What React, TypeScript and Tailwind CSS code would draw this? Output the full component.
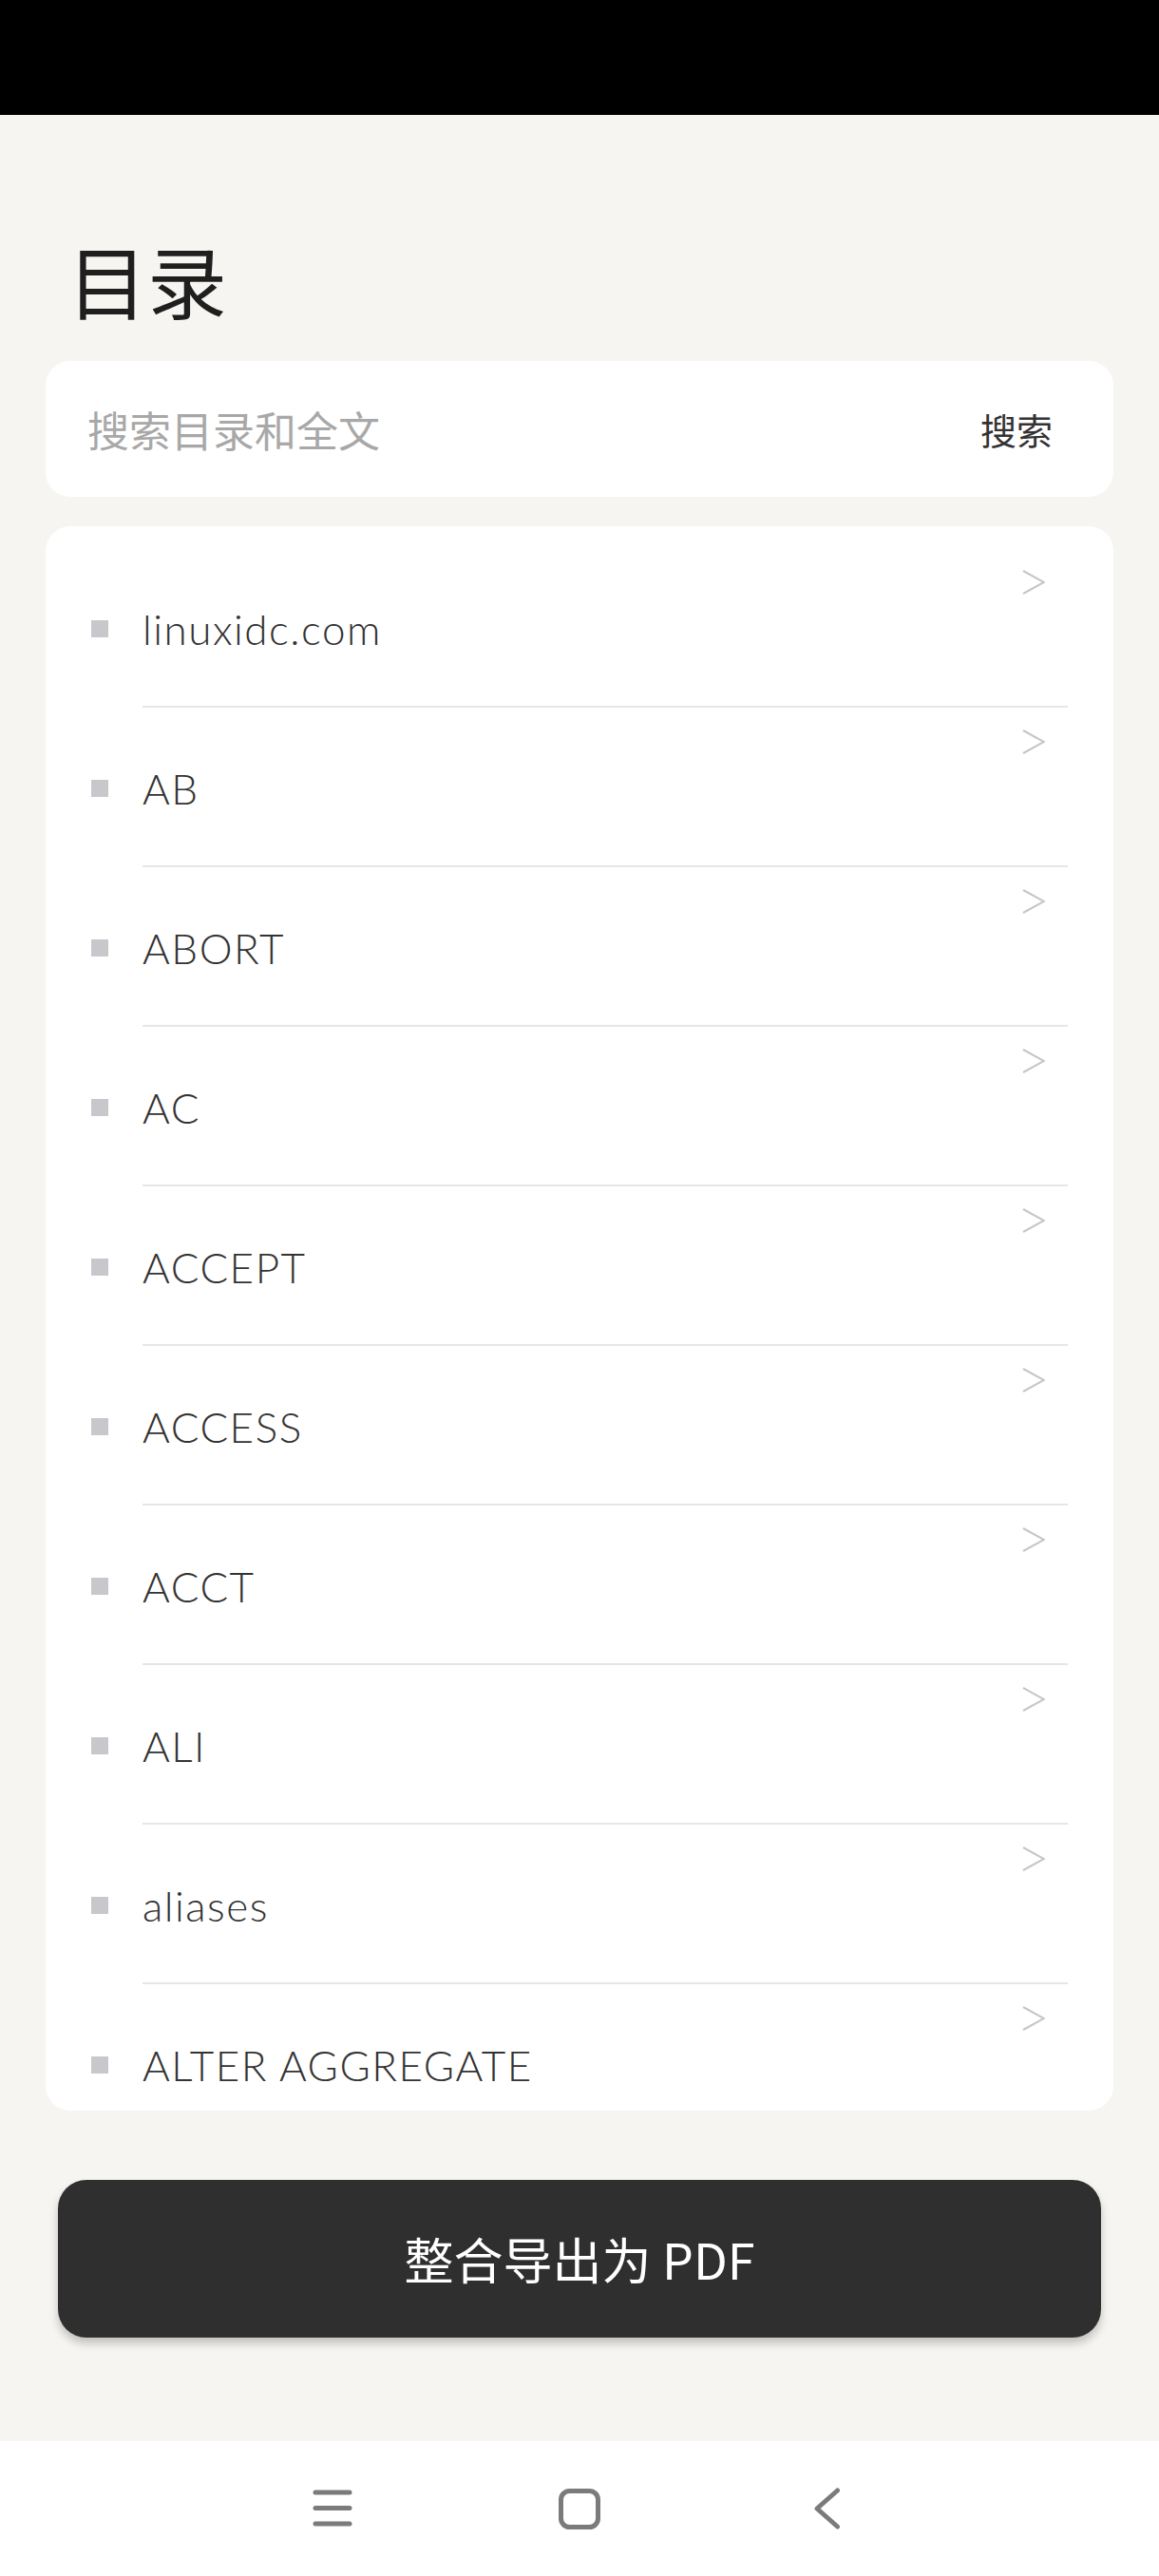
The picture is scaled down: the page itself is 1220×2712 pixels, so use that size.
import React from "react";

const items = [
  "linuxidc.com",
  "AB",
  "ABORT",
  "AC",
  "ACCEPT",
  "ACCESS",
  "ACCT",
  "ALI",
  "aliases",
  "ALTER AGGREGATE",
];

function Chevron() {
  return (
    <svg width="24" height="26" viewBox="0 0 24 26" fill="none">
      <polyline points="1,1 23,13 1,25" stroke="#c6c6ca" strokeWidth="2" strokeLinejoin="miter" />
    </svg>
  );
}

function Row({ label }: { label: string }) {
  return (
    <div className="flex shrink-0 flex-col pt-[23px]">
      <div className="flex h-[26px] justify-end pr-[72px]">
        <Chevron />
      </div>
      <div className="mt-[6px] flex h-[60px] items-center pl-[48px]">
        <div className="h-[18px] w-[18px] shrink-0 bg-[#c8c8cc]" />
        <span className="ml-[36px] whitespace-nowrap font-['Lato',sans-serif] text-[44px] font-light leading-[60px] tracking-[1.5px] text-[#333333]">
          {label}
        </span>
      </div>
      <div className="mt-[51px] ml-[102px] mr-[48px] h-[2px] bg-[#e6e6ea]" />
    </div>
  );
}

export default function App() {
  return (
    <div className="flex w-[1220px] flex-col bg-[#f6f5f1] font-['Noto_Sans_CJK_SC',sans-serif]">
      <div className="h-[121px] bg-black" />
      <div className="flex flex-col px-[48px]">
        <h1 className="mt-[131px] pl-[23px] text-[84px] font-normal leading-[84px] text-[#1f1f1f]">目录</h1>
        <div className="mt-[44px] flex h-[143px] items-center justify-between rounded-[26px] bg-white pl-[44px] pr-[64px]">
          <span className="text-[44px] leading-none text-[#a8a8a8]">搜索目录和全文</span>
          <span className="text-[38px] leading-none text-[#333333]">搜索</span>
        </div>
        <div className="mt-[31px] flex h-[1668px] flex-col overflow-hidden rounded-[26px] bg-white pt-[23px]">
          {items.map((it) => (
            <Row key={it} label={it} />
          ))}
        </div>
        <button className="mx-[13px] mt-[73px] mb-[109px] flex h-[166px] items-center justify-center rounded-[30px] bg-[#2f2f2f] text-[52px] leading-none text-white shadow-[0_6px_10px_rgba(0,0,0,0.22)]">
          整合导出为 PDF
        </button>
      </div>
      <div className="flex h-[142px] items-center justify-center bg-white">
        <div className="flex w-[260px] justify-center">
          <svg width="42" height="40" viewBox="0 0 42 40" fill="none">
            <line x1="3" y1="3" x2="39" y2="3" stroke="#7b7b7b" strokeWidth="5" strokeLinecap="round" />
            <line x1="3" y1="19.5" x2="39" y2="19.5" stroke="#7b7b7b" strokeWidth="5" strokeLinecap="round" />
            <line x1="3" y1="36" x2="39" y2="36" stroke="#7b7b7b" strokeWidth="5" strokeLinecap="round" />
          </svg>
        </div>
        <div className="flex w-[260px] justify-center">
          <svg width="44" height="43" viewBox="0 0 44 43" fill="none">
            <rect x="2.5" y="2.5" width="39" height="38" rx="9" stroke="#7b7b7b" strokeWidth="5" />
          </svg>
        </div>
        <div className="flex w-[260px] justify-center">
          <svg width="29" height="44" viewBox="0 0 29 44" fill="none">
            <polyline points="25.5,3 4,22 25.5,41" stroke="#7b7b7b" strokeWidth="5" strokeLinecap="round" strokeLinejoin="round" />
          </svg>
        </div>
      </div>
    </div>
  );
}
